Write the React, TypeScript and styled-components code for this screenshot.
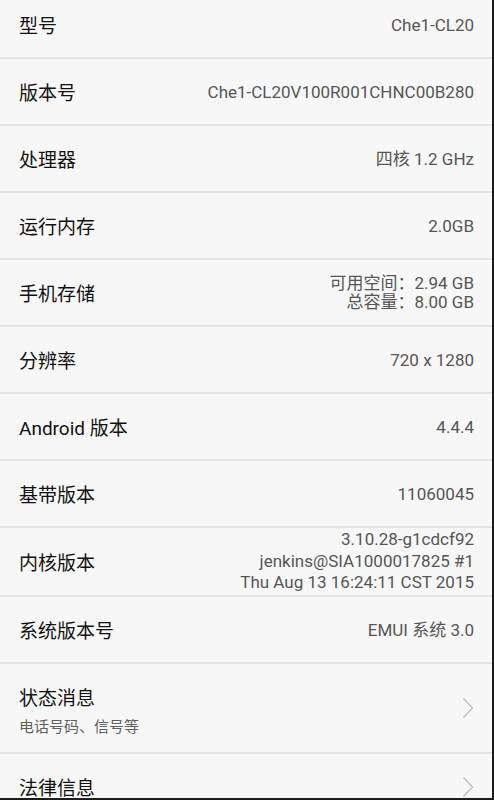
import styled, { createGlobalStyle } from "styled-components";

const GlobalStyle = createGlobalStyle`
    html, body {
        margin: 0;
        padding: 0;
        background: #f7f7f7;
    }
    body {
        font-family: Roboto, "Noto Sans CJK SC", sans-serif;
    }
`;

const Screen = styled.div`
    width: 494px;
    height: 800px;
    box-sizing: border-box;
    overflow: hidden;
    background: #f7f7f7;
    border-right: 2px solid #1c1c1c;
    border-bottom: 2px solid #1c1c1c;
`;

const List = styled.div`
    display: flex;
    flex-direction: column;
    margin-top: -8px;
`;

const Row = styled.div<{ $height?: number }>`
    display: flex;
    align-items: center;
    justify-content: space-between;
    height: ${(p) => p.$height ?? 65}px;
    padding: 0 18px 0 19px;
    border-bottom: 2px solid #e3e3e3;
    flex-shrink: 0;
`;

const Label = styled.div`
    font-size: 19px;
    color: #111;
    white-space: nowrap;
`;

const TitleBlock = styled.div`
    display: flex;
    flex-direction: column;
    gap: 5px;
    margin-top: 2px;
`;

const Sub = styled.div`
    font-size: 15px;
    color: #5f5f5f;
`;

const Value = styled.div<{ $lh?: number }>`
    font-size: 17px;
    color: #555;
    text-align: right;
    line-height: ${(p) => p.$lh ?? 20}px;
    white-space: nowrap;
`;

const Chevron = () => (
    <svg width="12" height="22" viewBox="0 0 12 22" fill="none">
        <path d="M1.5 1.5 L10.5 11 L1.5 20.5" stroke="#bdbdbd" strokeWidth="1.4" />
    </svg>
);

const rows: { label: string; value: string[]; height?: number; lh?: number }[] = [
    { label: "型号", value: ["Che1-CL20"] },
    { label: "版本号", value: ["Che1-CL20V100R001CHNC00B280"] },
    { label: "处理器", value: ["四核 1.2 GHz"] },
    { label: "运行内存", value: ["2.0GB"] },
    { label: "手机存储", value: ["可用空间：2.94 GB", "总容量：8.00 GB"], lh: 19 },
    { label: "分辨率", value: ["720 x 1280"] },
    { label: "Android 版本", value: ["4.4.4"] },
    { label: "基带版本", value: ["11060045"] },
    {
        label: "内核版本",
        value: ["3.10.28-g1cdcf92", "jenkins@SIA1000017825 #1", "Thu Aug 13 16:24:11 CST 2015"],
        height: 67,
        lh: 21.5,
    },
    { label: "系统版本号", value: ["EMUI 系统 3.0"] },
];

const App = () => {
    return (
        <Screen>
            <GlobalStyle />
            <List>
                {rows.map((r) => (
                    <Row key={r.label} $height={r.height}>
                        <Label>{r.label}</Label>
                        <Value $lh={r.lh}>
                            {r.value.map((v) => (
                                <div key={v}>{v}</div>
                            ))}
                        </Value>
                    </Row>
                ))}
                <Row $height={88}>
                    <TitleBlock>
                        <Label>状态消息</Label>
                        <Sub>电话号码、信号等</Sub>
                    </TitleBlock>
                    <Chevron />
                </Row>
                <Row $height={65}>
                    <Label>法律信息</Label>
                    <Chevron />
                </Row>
            </List>
        </Screen>
    );
};

export default App;
